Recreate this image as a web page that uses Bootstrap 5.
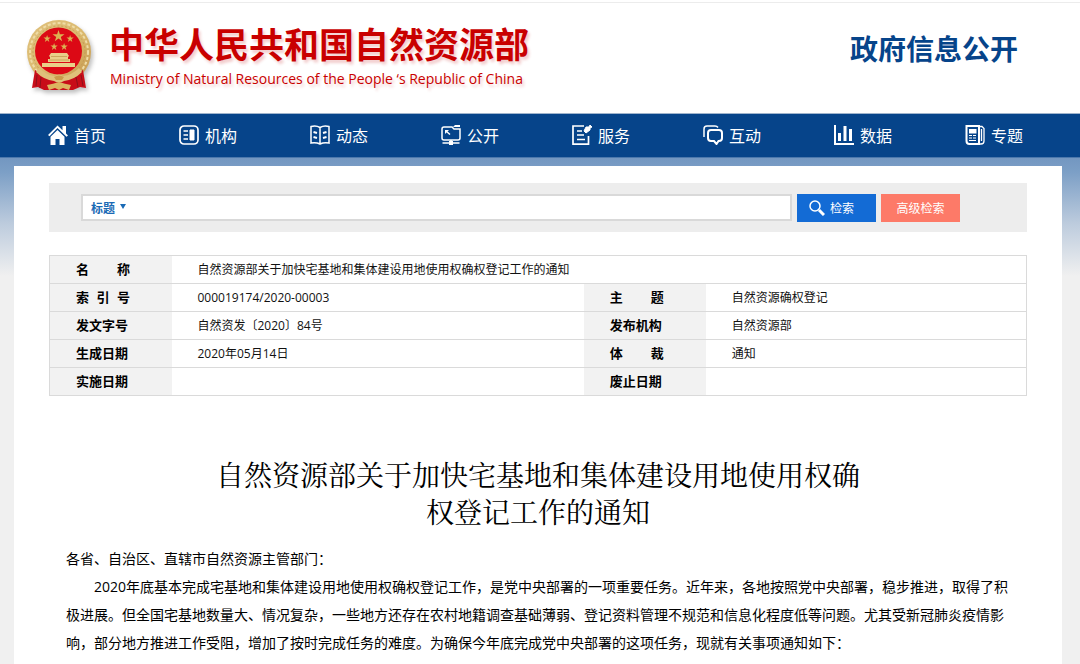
<!DOCTYPE html>
<html lang="zh-CN">
<head>
<meta charset="utf-8">
<meta name="viewport" content="width=device-width, initial-scale=1">
<title>自然资源部关于加快宅基地和集体建设用地使用权确权登记工作的通知</title>
<link rel="stylesheet" href="https://cdn.jsdelivr.net/npm/bootstrap@5.3.0/dist/css/bootstrap.min.css">
<style>
:root { --deep: #06448a; }
body { font-family: "Open Sans", "Noto Sans CJK SC", sans-serif; font-size: 14px; line-height: 28px; color: #000; background: #f0f0f0; overflow-x: hidden; }
.site-head { background: #fff; height: 113px; padding: 2px 0 0; }
.head-inner { border-top: 1px solid #ececec; padding: 16px 62px 0 25px; }
.emblem { width: 68px; height: 76px; flex: none; filter: drop-shadow(2px 3px 2px rgba(0,0,0,.25)); }
.ministry { color: #c90000; text-shadow: 2px 3px 3px rgba(190,0,0,.2); margin-left: 16px; }
.ministry-cn { font: 700 35px/44px "Noto Sans CJK SC", sans-serif; margin: 2px 0; white-space: nowrap; }
.ministry-en { font-size: 14px; line-height: 24px; margin: 0; padding-left: 1px; white-space: nowrap; }
.gov-open { font: 700 28px/40px "Noto Sans CJK SC", sans-serif; color: var(--deep); margin: 9px 0 0; white-space: nowrap; }
.main-nav { background: var(--deep); border-top: 1px solid #9fb4cd; height: 45px; padding: 0 18px 0 14px; border-bottom: 1px solid #4b78ad; }
.main-nav .nav-link { font: 400 16px/24px "Noto Sans CJK SC", sans-serif; color: #fff; padding: 9px 0 10px 34px; gap: 6px; }
.main-nav svg { width: 20px; height: 20px; flex: none; }
.page-bg { background: linear-gradient(#7397c1 0, #7c9fc6 14px, #bccbdd 65px, #f0f0f0 118px); padding: 8px 18px 0 14px; }
.panel { background: #fff; padding: 17px 35px 40px; min-height: calc(100vh - 166px); }
.search-bar { background: #ededed; padding: 11px 67px 10px 32px; gap: 5px; margin-bottom: 23px; }
.search-field { border: 2px solid #d9d9d9; background: #fff; height: 27px; }
.search-field select { appearance: none; border: 0; background: none; color: #1a6ab5; font: 700 12px/23px "Noto Sans CJK SC", sans-serif; padding: 0 18px 0 8px; }
.search-field input { border: 0; outline: 0; background: none; font-size: 12px; min-width: 0; }
.caret { pointer-events: none; width: 0; border: 3px solid transparent; border-top: 5px solid #1a6ab5; border-bottom: 0; margin: 0 6px 3px -14px; }
.find-btn { width: 79px; height: 28px; border: 0; border-radius: 0; padding: 0; font: 400 12px/28px "Noto Sans CJK SC", sans-serif; color: #fff; }
.find-btn.go { background: #136bd5; gap: 5px; padding-right: 10px; }
.find-btn.more { background: #fd7a68; }
.info-table { table-layout: fixed; border: 1px solid #dadada; margin: 0 0 62px; font-size: 12px; color: #111; }
.info-table th, .info-table td { height: 28px; padding: 0 0 0 26px; line-height: 27px; border: 0; border-bottom: 1px solid #dadada; background: #fff; box-shadow: none; }
.info-table th { background: #f2f2f2; font-size: 13px; font-weight: 700; color: #000; }
.info-table col.label { width: 122px; }
.info-table col.wide { width: 42.2%; }
.spread { display: inline-block; width: 54px; text-align-last: justify; vertical-align: top; }
.doc-title { font: 400 28px/37px "Liberation Serif", "Noto Serif CJK SC", "Noto Sans CJK SC", serif; text-align: center; margin: 0 0 13px; color: #000; }
.doc-text { padding: 0 17px; }
.doc-text p { margin: 0; }
.doc-text .indent { text-indent: 28px; }
</style>
</head>
<body>
<header class="site-head">
  <div class="head-inner d-flex align-items-start">
    <svg class="emblem" viewBox="0 0 68 76" role="img" aria-label="国徽">
      <defs><linearGradient id="gold" x1="0" y1="0" x2="1" y2="1"><stop offset="0" stop-color="#dfc07c"/><stop offset=".5" stop-color="#dcbb70"/><stop offset="1" stop-color="#c4964a"/></linearGradient></defs>
      <circle cx="34" cy="33" r="32" fill="url(#gold)"/>
      <circle cx="34" cy="33" r="29" fill="none" stroke="#efdca6" stroke-width="2" stroke-dasharray="3 2"/>
      <circle cx="34" cy="33" r="26" fill="none" stroke="#bd9450" stroke-width=".7" stroke-dasharray="2 2"/>
      <circle cx="33.500" cy="32" r="23.500" fill="#dc0915"/>
      <g fill="#dcb353"><path id="star" d="m33.500 11 1.400 4.200h4.600l-3.700 2.700 1.400 4.400-3.700-2.700-3.700 2.700 1.400-4.400-3.700-2.700h4.600z"/>
      <use href="#star" transform="translate(2 9.500) scale(.6)"/><use href="#star" transform="translate(25 9.500) scale(.6)"/><use href="#star" transform="translate(9 17.500) scale(.6)"/><use href="#star" transform="translate(19 17.500) scale(.6)"/></g>
      <path d="M26 34h16l2 3-1 1v2h2v3H23v-3h2v-2l-1-1zM17 44h33v4H17z" fill="#e9cf88"/>
      <path d="M26 37.500h16M24 41h20" stroke="#b98a3e" stroke-width=".6"/>
      <path d="M10 51q6 3 10 7l14 2 14-2q4-4 10-7l3 18-6-1-7 3H19l-6-3-6 1z" fill="#c80d19"/>
      <path d="M14 49q7 7 16 8 4-3 8 0 9-1 16-8l3 4q-8 8-18 9-5 3-10 0-10-1-18-9z" fill="#dfc17a"/>
      <path d="M29 58q5-3 10 0l-2 3h-6z" fill="#c99b4b"/>
      <path d="M22 66q6-1 12-3 6 2 12 3l-2 5-6-2-4 2-4-2-6 2z" fill="#dcb560"/>
      <path d="m12 56-1 11m5-9-1 11m41-13 2 11m-7-9 2 10" stroke="#8d101a" fill="none"/>
    </svg>
    <div class="ministry">
      <h1 class="ministry-cn">中华人民共和国自然资源部</h1>
      <p class="ministry-en">Ministry of Natural Resources of the People ‘s Republic of China</p>
    </div>
    <h2 class="gov-open ms-auto">政府信息公开</h2>
  </div>
</header>
<nav class="main-nav">
  <ul class="nav row row-cols-8 g-0 flex-nowrap">
    <li class="col"><a class="nav-link d-flex align-items-center" href="#"><svg viewBox="0 0 20 20"><path d="M0 10 9.500.5l5 4.800V1H18v7.500l2 2-1.500 1.200-9-8.700-8 8.300z" fill="#fff"/><path d="m9.500 5 7 6.700V20h-5v-6h-4v6h-5v-8.300z" fill="#fff"/></svg>首页</a></li>
    <li class="col"><a class="nav-link d-flex align-items-center" href="#"><svg viewBox="0 0 20 20" fill="none" stroke="#fff" stroke-width="1.700"><rect x="1" y="1" width="18" height="18" rx="4"/><path d="M4.500 6H9M4.500 10H9M4.500 14H9"/><path d="M11 5h4v10h-4z" fill="#fff" stroke-width="1"/></svg>机构</a></li>
    <li class="col"><a class="nav-link d-flex align-items-center" href="#"><svg viewBox="0 0 20 20" fill="none" stroke="#fff" stroke-width="1.500"><path d="M1 1.500q5-1.500 9 1 4-2.500 9-1v16.500q-5-1-9 1-4-2-9-1zM10 3v16"/><path d="m3.500 7 3.500 1M3.500 12 7 13M16.500 7 13 8M16.500 12 13 13" stroke-width="2"/></svg>动态</a></li>
    <li class="col"><a class="nav-link d-flex align-items-center" href="#"><svg viewBox="0 0 20 20" fill="none" stroke="#fff" stroke-width="1.500"><path d="M11 2H3Q1 2 1 4v9q0 2 2 2h14q2 0 2-2V4h-6z"/><path d="M14 0h5v2h-7z" fill="#fff" stroke="none"/><path d="m5 6 4 3.500M10 15v4M1.500 18h17"/><path d="M4 5h4L4 9zM8 16h4v4H8z" fill="#fff" stroke="none"/></svg>公开</a></li>
    <li class="col"><a class="nav-link d-flex align-items-center" href="#"><svg viewBox="0 0 20 20" fill="none" stroke="#fff" stroke-width="1.700"><path d="M12 1H1v18.200h15.500V11M5 6h5M5 10h7M5 14.500h8"/><path d="m12 6 2-4h3l1-2 2 2-2 1v2l-4 3z" fill="#fff" stroke-width="1"/></svg>服务</a></li>
    <li class="col"><a class="nav-link d-flex align-items-center" href="#"><svg viewBox="0 0 20 20" fill="none" stroke="#fff" stroke-width="1.500"><path d="M1 12V4q0-3 3-3h8q2 0 3 1.500"/><path d="M8 5h8q3 0 3 3v5q0 3-3 3h-.5L13.500 19 11 16H8q-3 0-3-3V8q0-3 3-3z" stroke-width="2"/></svg>互动</a></li>
    <li class="col"><a class="nav-link d-flex align-items-center" href="#"><svg viewBox="0 0 20 20" fill="none" stroke="#fff" stroke-width="2"><path d="M1 0v19h19"/><path d="M5.500 8v8M11 1v15M16.500 4v12" stroke-width="3"/></svg>数据</a></li>
    <li class="col"><a class="nav-link d-flex align-items-center" href="#"><svg viewBox="0 0 20 20" fill="none" stroke="#fff" stroke-width="2"><path d="M1.500 1H14v18H4.500q-3 0-3-3z"/><path d="M14 1.500h3l2 2V16q0 3-3 3h-2M16.500 4v12" stroke-width="1.300"/><path d="M4 4h7.500v4.500H4z" fill="#fff" stroke="none"/><path d="M4 10.500h3m1 0h3M4 13h3m1 0h3M4 15.500h7" stroke-width="1"/></svg>专题</a></li>
  </ul>
</nav>
<div class="page-bg">
  <main class="panel">
    <form class="search-bar d-flex" role="search" onsubmit="return false">
      <div class="search-field d-flex align-items-center flex-grow-1">
        <select aria-label="检索字段"><option>标题</option></select><span class="caret"></span>
        <input class="flex-grow-1" type="text" aria-label="检索内容">
      </div>
      <button class="btn find-btn go d-flex align-items-center justify-content-center" type="submit"><svg width="16" height="16" viewBox="0 0 16 16" fill="none" stroke="#fff"><circle cx="6" cy="6" r="5" stroke-width="1.500"/><path d="m10 10 5 5" stroke-width="3"/></svg>检索</button>
      <button class="btn find-btn more" type="button">高级检索</button>
    </form>
    <table class="table info-table">
      <colgroup><col class="label"><col class="wide"><col class="label"><col></colgroup>
      <tbody>
        <tr><th scope="row"><span class="spread">名 称</span></th><td colspan="3">自然资源部关于加快宅基地和集体建设用地使用权确权登记工作的通知</td></tr>
        <tr><th scope="row"><span class="spread">索 引 号</span></th><td>000019174/2020-00003</td><th scope="row"><span class="spread">主 题</span></th><td>自然资源确权登记</td></tr>
        <tr><th scope="row">发文字号</th><td>自然资发〔2020〕84号</td><th scope="row">发布机构</th><td>自然资源部</td></tr>
        <tr><th scope="row">生成日期</th><td>2020年05月14日</td><th scope="row"><span class="spread">体 裁</span></th><td>通知</td></tr>
        <tr><th scope="row">实施日期</th><td></td><th scope="row">废止日期</th><td></td></tr>
      </tbody>
    </table>
    <article>
      <h2 class="doc-title">自然资源部关于加快宅基地和集体建设用地使用权确<br>权登记工作的通知</h2>
      <div class="doc-text">
        <p>各省、自治区、直辖市自然资源主管部门：</p>
        <p class="indent">2020年底基本完成宅基地和集体建设用地使用权确权登记工作，是党中央部署的一项重要任务。近年来，各地按照党中央部署，稳步推进，取得了积极进展。但全国宅基地数量大、情况复杂，一些地方还存在农村地籍调查基础薄弱、登记资料管理不规范和信息化程度低等问题。尤其受新冠肺炎疫情影响，部分地方推进工作受阻，增加了按时完成任务的难度。为确保今年底完成党中央部署的这项任务，现就有关事项通知如下：</p>
      </div>
    </article>
  </main>
</div>
<script src="https://cdn.jsdelivr.net/npm/bootstrap@5.3.0/dist/js/bootstrap.bundle.min.js"></script>
</body>
</html>
